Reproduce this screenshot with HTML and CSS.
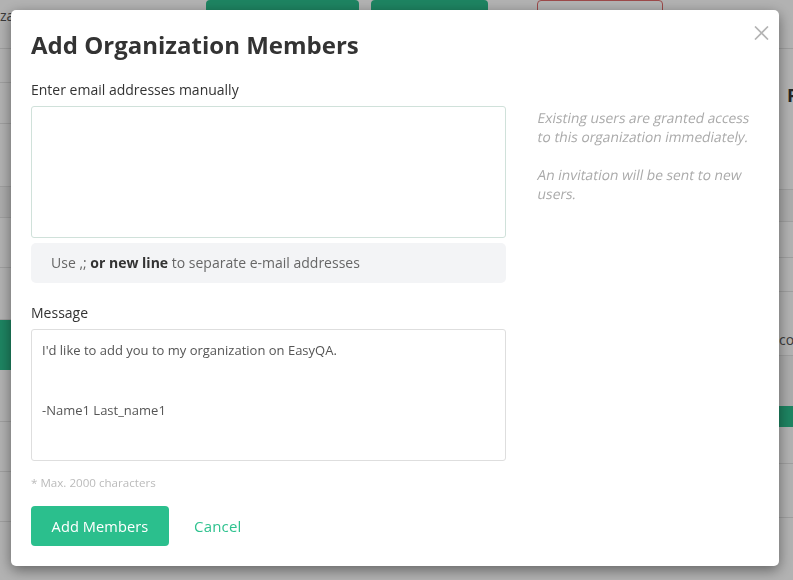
FILE: index.html
```html
<!DOCTYPE html>
<html lang="en">
<head>
<meta charset="utf-8">
<title>Add Organization Members</title>
<link rel="stylesheet" href="styles.css">
</head>
<body>
<div class="page">
  <header class="topbar">
    <div class="crumbs">
      <span class="crumb">zation</span>
      <span class="crumb">My Projects</span>
    </div>
    <div class="actions">
      <span class="pbtn green w1"></span>
      <span class="pbtn green w2"></span>
      <span class="pbtn outline"></span>
    </div>
  </header>
  <div class="cols">
    <div class="col-left">
      <div class="row h34"></div>
      <div class="row h41"></div>
      <div class="row h63"></div>
      <div class="row h31 band"></div>
      <div class="row h50"></div>
      <div class="row h52"></div>
      <div class="row h50 greenrow"></div>
      <div class="row h52"></div>
      <div class="row h50"></div>
      <div class="row h50"></div>
    </div>
    <div class="col-right">
      <div class="row h141"><span class="rtitle">P</span></div>
      <div class="row h32 band"></div>
      <div class="row h36"></div>
      <div class="row h34"></div>
      <div class="row h64"><span class="rtext">col</span></div>
      <div class="row h10 band plain"></div>
      <div class="row h40 band plain"></div>
      <div class="row h21 greenrow plain"></div>
      <div class="row h37"></div>
      <div class="row h54"></div>
    </div>
  </div>
</div>
<div class="overlay"></div>

<div class="modal">
  <button class="close" type="button" aria-label="Close">
    <svg width="15" height="14" viewBox="0 0 15 14"><path d="M1 0.5 L14 13.5 M14 0.5 L1 13.5" stroke="#b4b4b4" stroke-width="1.7" fill="none"/></svg>
  </button>
  <h2 class="title">Add Organization Members</h2>
  <div class="body">
    <div class="form">
      <label class="label">Enter email addresses manually</label>
      <textarea class="field emails"></textarea>
      <div class="hint">Use ,; <b>or new line</b> to separate e-mail addresses</div>
      <label class="label msg-label">Message</label>
      <textarea class="field message">I'd like to add you to my organization on EasyQA.


-Name1 Last_name1</textarea>
      <div class="note">* Max. 2000 characters</div>
      <div class="buttons">
        <button class="primary" type="button">Add Members</button>
        <a class="cancel" href="#">Cancel</a>
      </div>
    </div>
    <aside class="info">
      <p><span class="ln">Existing users are granted access</span><span class="ln">to this organization immediately.</span></p>
      <p><span class="ln">An invitation will be sent to new</span><span class="ln">users.</span></p>
    </aside>
  </div>
</div>
</body>
</html>
```

FILE: styles.css
```css
* { box-sizing: border-box; }
html, body { margin: 0; padding: 0; }
body {
  font-family: "Open Sans", "Noto Sans", sans-serif;
  color: #333;
  background: #fff;
  overflow: hidden;
}

/* background page */
.page { height: 580px; overflow: hidden; background: #fff; }
.topbar {
  display: flex;
  align-items: flex-start;
  height: 49px;
  border-bottom: 1px solid #e4e4e4;
}
.crumbs {
  width: 206px;
  flex-shrink: 0;
  display: flex;
  gap: 40px;
  padding-top: 6px;
  font-size: 14px;
  color: #555;
}
.crumbs .crumb:last-child { color: #888; }
.actions { display: flex; }
.pbtn { display: block; height: 36px; border-radius: 4px; }
.green { background: #2bbd8c; }
.w1 { width: 153px; }
.w2 { width: 117px; margin-left: 12px; }
.outline { width: 126px; margin-left: 49px; border: 1px solid #e06a6a; }

.cols { display: flex; }
.col-left { width: 400px; flex-shrink: 0; }
.col-right { flex: 1; min-width: 0; padding-left: 379px; }
.row { border-bottom: 1px solid #e4e4e4; }
.row.plain { border-bottom: 0; }
.band { background: #f6f6f6; }
.greenrow { background: #2bbd8c; border-bottom: 0; }
.h10 { height: 10px; }
.h21 { height: 21px; }
.h31 { height: 31px; }
.h32 { height: 32px; }
.h34 { height: 34px; }
.h36 { height: 36px; }
.h37 { height: 37px; }
.h40 { height: 40px; }
.h41 { height: 41px; }
.h50 { height: 50px; }
.h52 { height: 52px; }
.h54 { height: 54px; }
.h63 { height: 63px; }
.h64 { height: 64px; }
.h141 { height: 141px; }
.rtitle { display: block; padding: 34px 0 0 8px; font-size: 18px; font-weight: 700; color: #333; }
.rtext { display: block; padding: 38px 0 0 0; font-size: 14px; color: #555; }

.overlay {
  position: fixed;
  inset: 0;
  background: rgba(0, 0, 0, 0.3);
}

/* modal */
.modal {
  position: fixed;
  left: 11px;
  top: 10px;
  width: 768px;
  padding: 21px 20px 20px;
  background: #fff;
  border-radius: 5px;
  box-shadow: 0 4px 14px rgba(0, 0, 0, 0.45);
}
.close {
  position: absolute;
  top: 16px;
  right: 10px;
  width: 15px;
  height: 14px;
  padding: 0;
  border: 0;
  background: none;
  line-height: 0;
  cursor: pointer;
}
.title {
  margin: 0 0 22px;
  font-size: 24px;
  line-height: 27px;
  font-weight: 700;
  color: #333;
}
.body {
  display: grid;
  grid-template-columns: 475px 1fr;
  column-gap: 31px;
}
.label {
  display: block;
  font-size: 14px;
  line-height: 20px;
  color: #333;
  margin-bottom: 6px;
}
.msg-label { margin-top: 20px; }
.field {
  display: block;
  width: 100%;
  height: 132px;
  margin: 0;
  padding: 10px 10px;
  border-radius: 3px;
  resize: none;
  font-family: "Open Sans", "Noto Sans", sans-serif;
  font-size: 13px;
  line-height: 20px;
  color: #555;
  background: #fff;
  outline: none;
}
.emails { border: 1px solid #d0e1da; }
.message { border: 1px solid #dedede; }
.hint {
  margin-top: 5px;
  height: 40px;
  line-height: 40px;
  padding: 0 20px;
  background: #f3f4f6;
  border-radius: 5px;
  font-size: 14px;
  color: #666;
}
.hint b { color: #333; font-weight: 700; }
.note {
  margin-top: 13px;
  font-size: 11.6px;
  line-height: 17px;
  color: #bbb;
}
.buttons {
  margin-top: 15px;
  display: flex;
  align-items: center;
  gap: 25px;
}
.primary {
  height: 40px;
  width: 138px;
  border: 0;
  border-radius: 4px;
  background: #2bbf8d;
  color: #fff;
  font-family: "Open Sans", "Noto Sans", sans-serif;
  font-size: 14.6px;
  letter-spacing: 0.1px;
  cursor: pointer;
}
.cancel {
  font-size: 15px;
  letter-spacing: 0.2px;
  color: #2fc28f;
  text-decoration: none;
}
.info {
  margin-top: 28px;
  font-size: 13.8px;
  line-height: 19px;
  color: #aaa;
}
.info p { margin: 0 0 19px; }
/* the reference shows a slanted (synthetic oblique) regular face */
.info .ln {
  display: block;
  white-space: nowrap;
  transform: skewX(-11deg);
  transform-origin: 0 75%;
}
```
